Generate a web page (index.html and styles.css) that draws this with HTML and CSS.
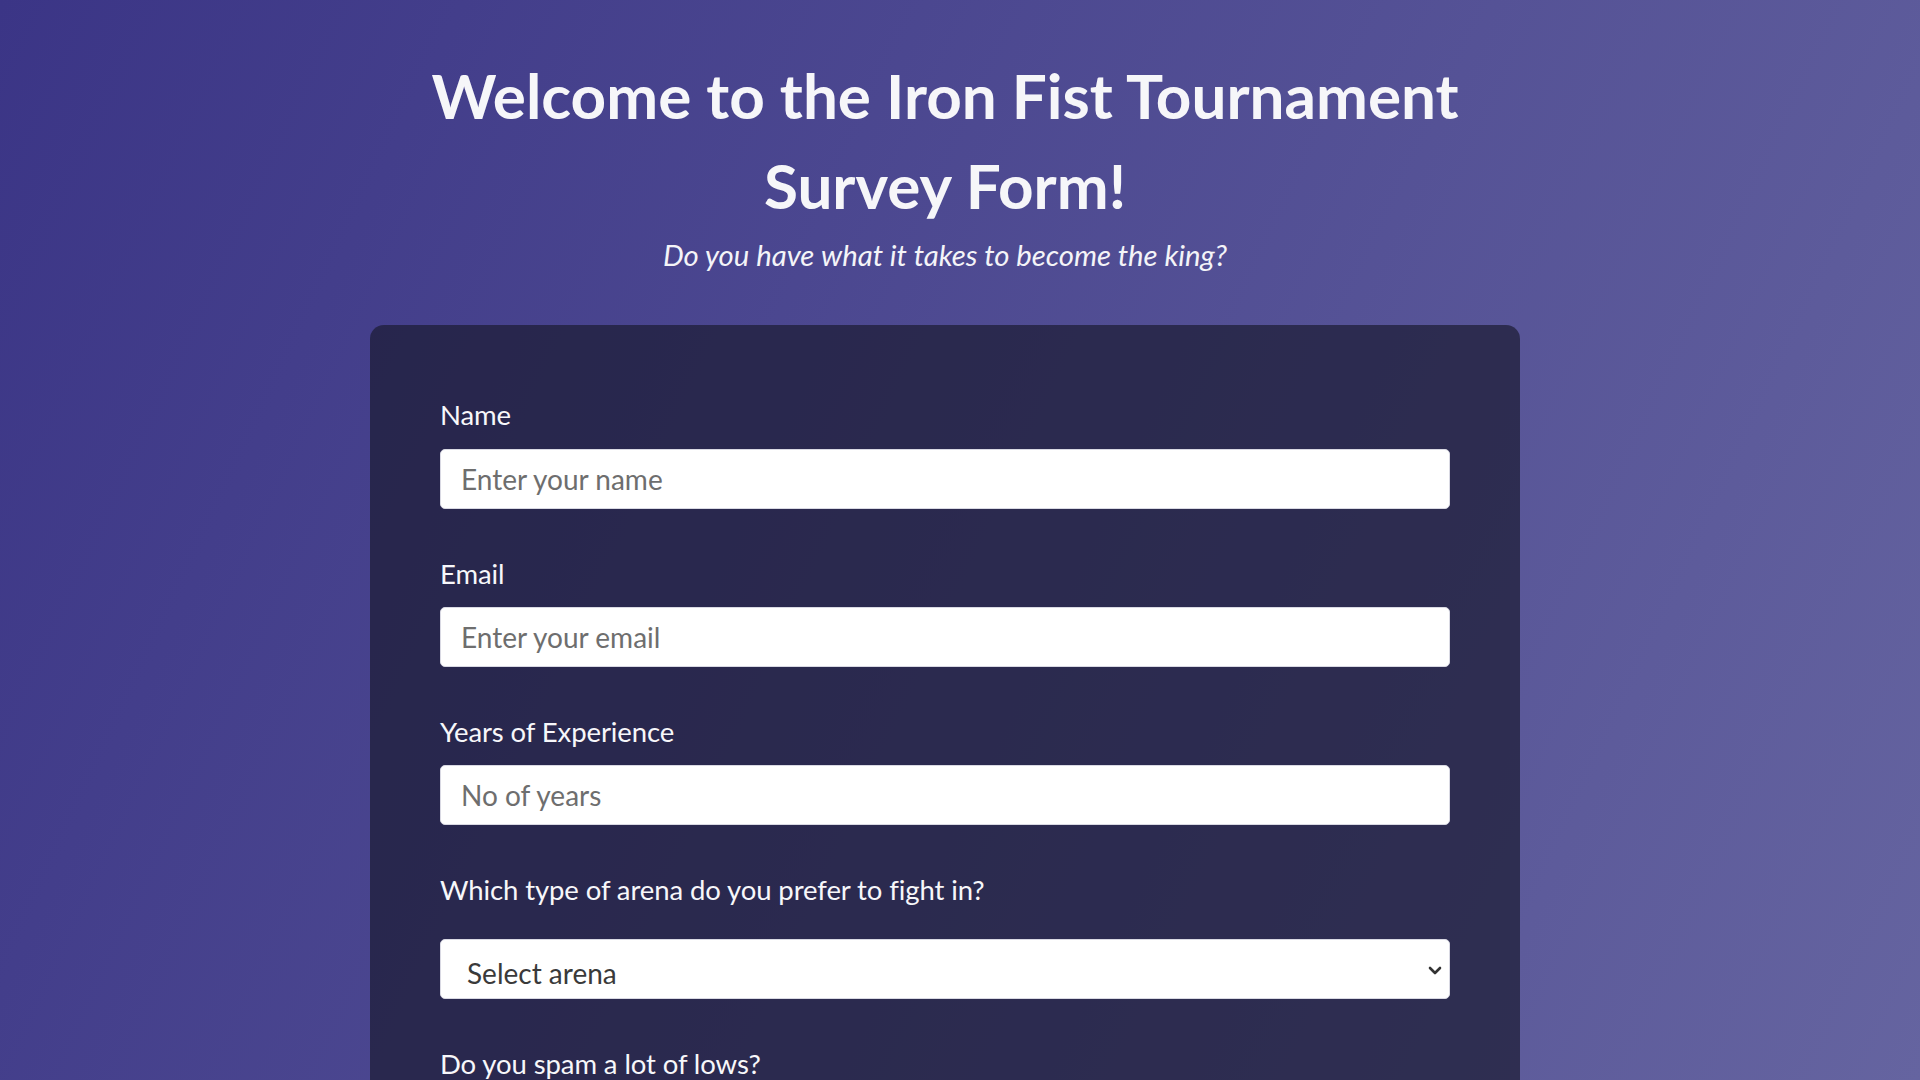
FILE: index.html
```html
<!DOCTYPE html>
<html lang="en">
<head>
<meta charset="utf-8">
<title>Iron Fist Tournament Survey Form</title>
<link rel="stylesheet" href="styles.css">
</head>
<body>
<div class="page">
  <header class="header">
    <h1 id="title" class="title">Welcome to the Iron Fist Tournament Survey Form!</h1>
    <p id="description" class="description">Do you have what it takes to become the king?</p>
  </header>
  <form id="survey-form" class="card">
    <div class="group">
      <label class="label" id="name-label" for="name">Name</label>
      <input class="field" type="text" id="name" placeholder="Enter your name" required>
    </div>
    <div class="group">
      <label class="label" id="email-label" for="email">Email</label>
      <input class="field" type="email" id="email" placeholder="Enter your email" required>
    </div>
    <div class="group">
      <label class="label" id="number-label" for="number">Years of Experience</label>
      <input class="field" type="number" id="number" placeholder="No of years" min="0" max="99">
    </div>
    <div class="group">
      <p class="label label-select">Which type of arena do you prefer to fight in?</p>
      <div class="select-wrap">
        <select class="field select" id="dropdown">
          <option disabled selected value>Select arena</option>
          <option>Outdoor</option>
          <option>Indoor</option>
          <option>Underground</option>
        </select>
        <svg class="chevron" width="14" height="9" viewBox="0 0 14 9" aria-hidden="true"><path d="M2 2 L7 7 L12 2" fill="none" stroke="#333" stroke-width="2.6" stroke-linecap="round" stroke-linejoin="round"/></svg>
      </div>
    </div>
    <div class="group">
      <p class="label">Do you spam a lot of lows?</p>
      <label class="option"><input type="radio" name="lows" value="yes"> Yes</label>
      <label class="option"><input type="radio" name="lows" value="no"> No</label>
    </div>
    <div class="group">
      <p class="label">Any comments or suggestions?</p>
      <textarea class="field area" placeholder="Enter your comment here..."></textarea>
    </div>
    <button class="submit" type="submit" id="submit">Submit</button>
  </form>
</div>
</body>
</html>
```

FILE: styles.css
```css
* { box-sizing: border-box; }

html, body {
  margin: 0;
  padding: 0;
}

body {
  min-height: 100vh;
  font-family: Lato, "Open Sans", sans-serif;
  line-height: 1.4;
  color: #f4f4f8;
  background: linear-gradient(115deg, #3b3586 0%, #6564a0 100%);
  background-attachment: fixed;
}

.page {
  padding-right: 30px;
  display: flex;
  flex-direction: column;
  align-items: center;
}

.header {
  width: 1150px;
  text-align: center;
}

.title {
  margin: 51px 0 5px;
  font-size: 62px;
  font-weight: 700;
  line-height: 89.6px;
  color: #f6f6f9;
}

.description {
  margin: 0;
  font-size: 29.3px;
  font-style: italic;
  line-height: 39.2px;
  color: #f4f4f8;
}

.card {
  width: 1150px;
  margin-top: 51px;
  padding: 70px 70px 70px;
  border-radius: 14px;
  background: rgba(27, 27, 50, 0.7);
}

.group {
  margin-bottom: 45px;
}

.label {
  display: block;
  margin: 0 0 14px;
  font-size: 27.5px;
  letter-spacing: -0.1px;
  line-height: 39.2px;
  color: #f7f7fa;
}

.label-select {
  margin-bottom: 30px;
}

.field {
  display: block;
  width: 100%;
  height: 60px;
  padding: 0 20px;
  border: 1px solid #d9d9e3;
  border-radius: 5px;
  background: #fff;
  font-family: Lato, "Open Sans", sans-serif;
  font-size: 28px;
  color: #333;
}

.field::placeholder {
  color: #6e6e6e;
}

.select-wrap {
  position: relative;
}

.select {
  appearance: none;
  -webkit-appearance: none;
  padding: 8px 20px 0 26px;
  color: #3a3a3a;
}

.chevron {
  position: absolute;
  right: 8px;
  top: 27px;
  pointer-events: none;
}

.option {
  display: block;
  font-size: 26px;
  margin-bottom: 8px;
}

.area {
  height: 160px;
  padding-top: 12px;
  resize: vertical;
}

.submit {
  display: block;
  width: 100%;
  height: 60px;
  border: none;
  border-radius: 5px;
  background: #37af65;
  color: #fff;
  font-family: Lato, "Open Sans", sans-serif;
  font-size: 28px;
}
```
